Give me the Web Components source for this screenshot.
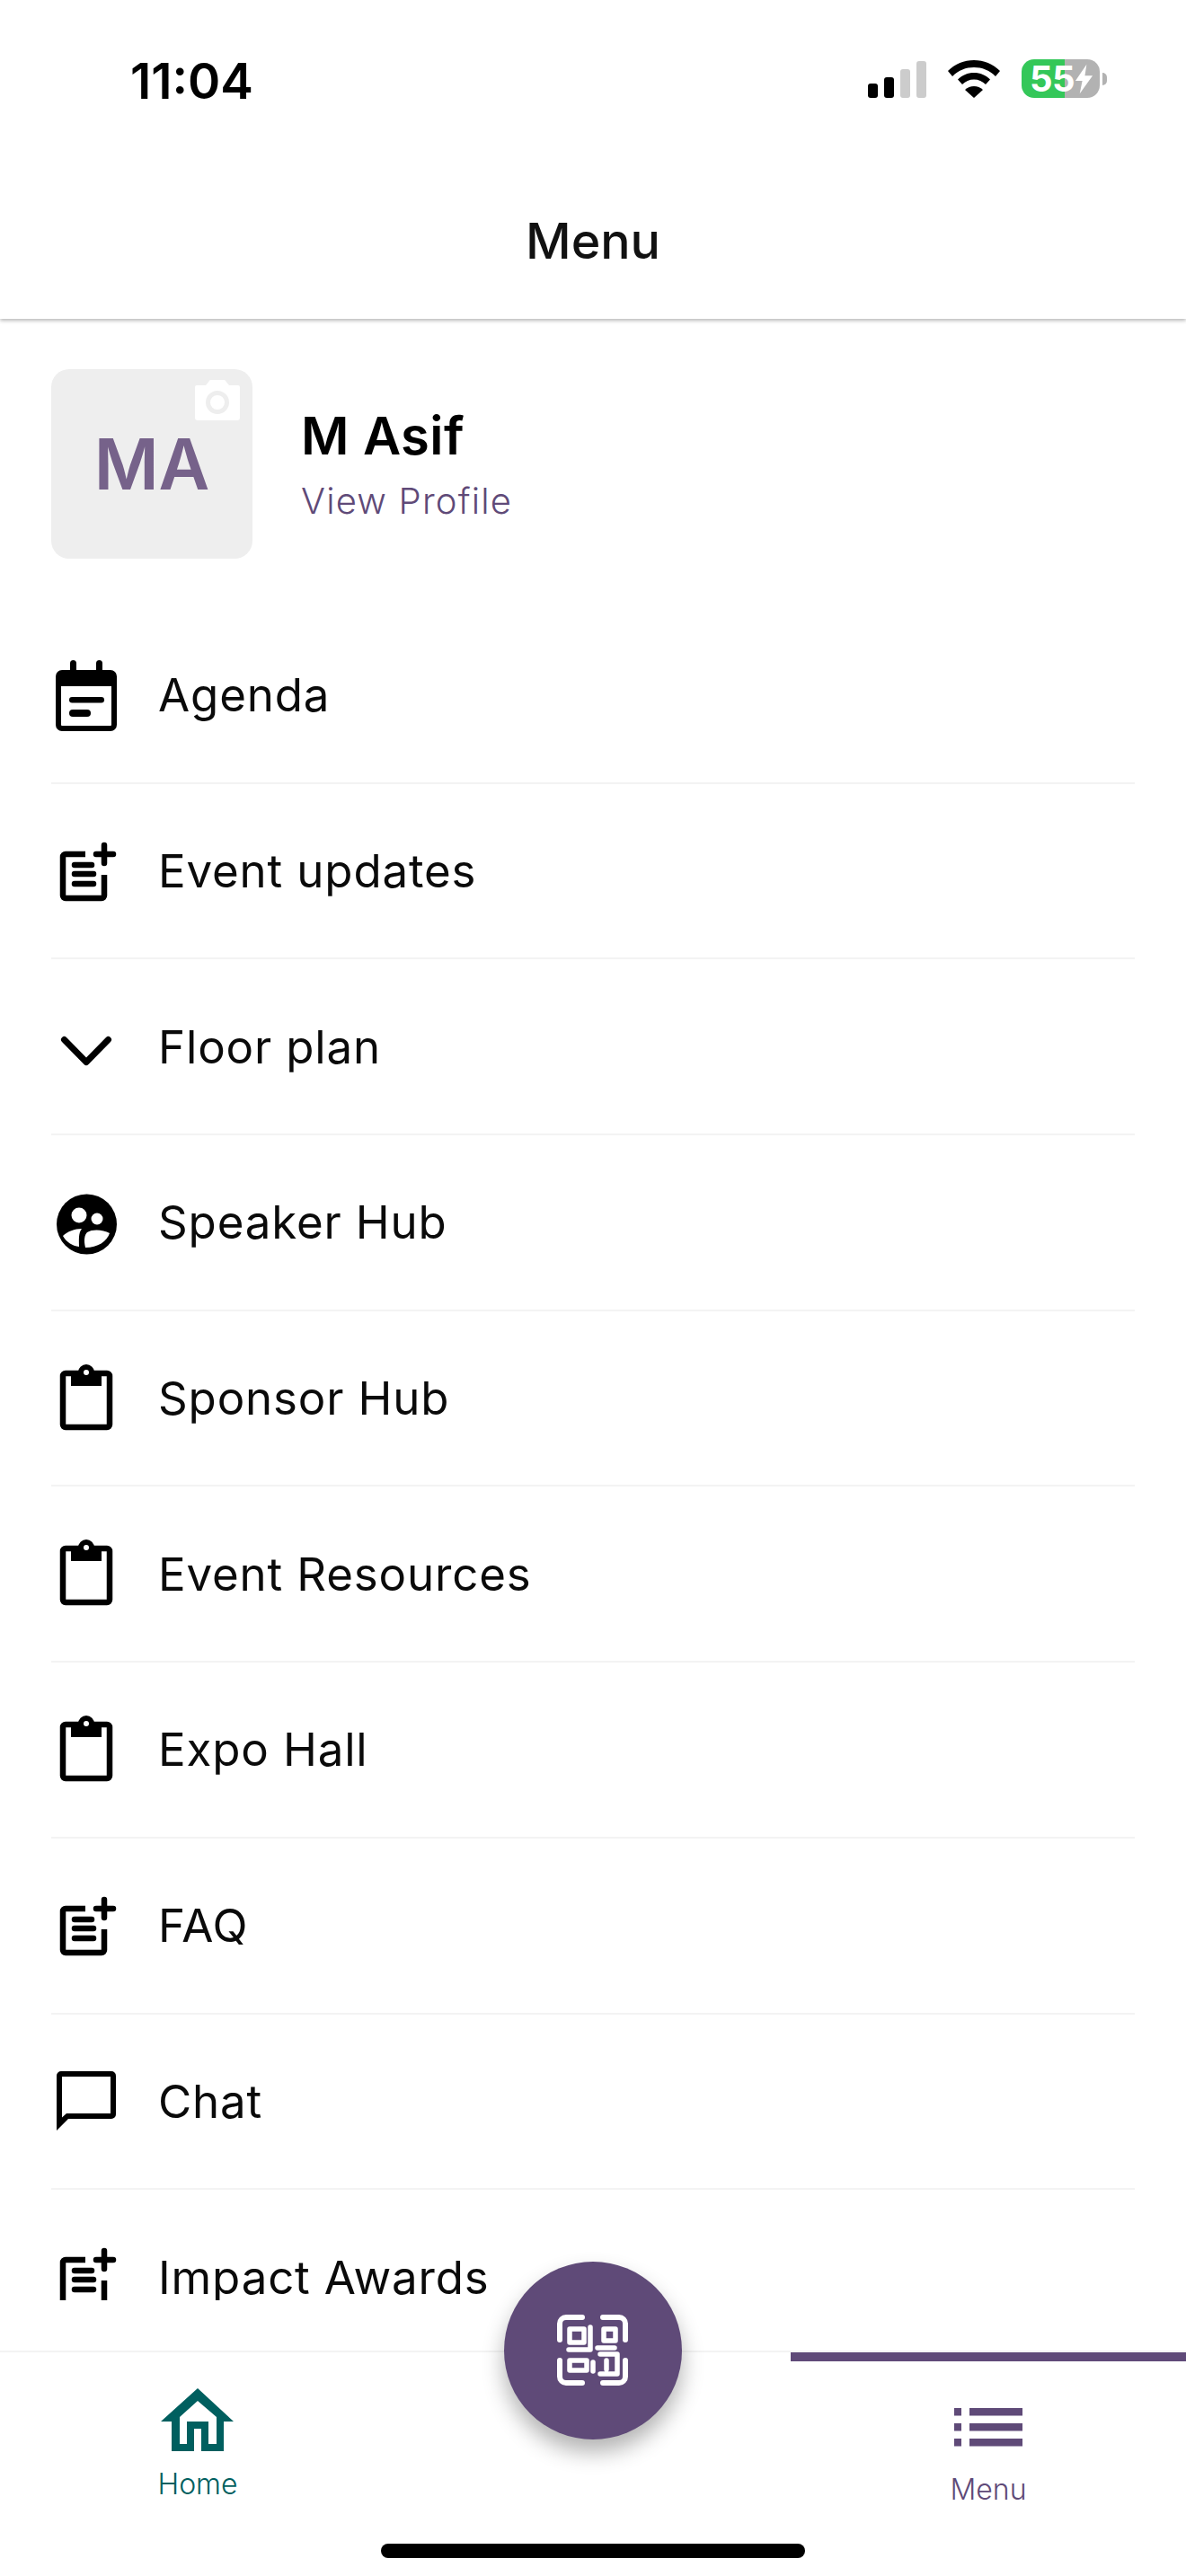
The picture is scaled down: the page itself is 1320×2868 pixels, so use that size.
<!DOCTYPE html>
<html><head><meta charset="utf-8"><style>
html,body{margin:0;padding:0;background:#fff}
body{font-family:Inter,"Liberation Sans",sans-serif;color:#000}
</style></head><body>
<app-shell>
  <status-bar slot="status"></status-bar>
  <top-bar slot="top">Menu</top-bar>
  <profile-card slot="main" initials="MA" name="M Asif" link="View Profile"></profile-card>
  <menu-row slot="main" icon="agenda">Agenda</menu-row>
  <menu-row slot="main" icon="note">Event updates</menu-row>
  <menu-row slot="main" icon="chev">Floor plan</menu-row>
  <menu-row slot="main" icon="group">Speaker Hub</menu-row>
  <menu-row slot="main" icon="clip">Sponsor Hub</menu-row>
  <menu-row slot="main" icon="clip">Event Resources</menu-row>
  <menu-row slot="main" icon="clip">Expo Hall</menu-row>
  <menu-row slot="main" icon="note">FAQ</menu-row>
  <menu-row slot="main" icon="chat">Chat</menu-row>
  <menu-row slot="main" icon="note">Impact Awards</menu-row>
  <bottom-nav slot="nav"></bottom-nav>
</app-shell>
<script>
const ICONS={
agenda:`<svg width="80" height="80" viewBox="0 0 80 80"><path fill="#000" fill-rule="evenodd" d="M21 4.500a3.500 3.500 0 0 1 7 0V12H50V4.500a3.500 3.500 0 0 1 7 0V12h9a7 7 0 0 1 7 7V73a7 7 0 0 1-7 7H12a7 7 0 0 1-7-7V19a7 7 0 0 1 7-7h9zM11 30V73a1 1 0 0 0 1 1H66a1 1 0 0 0 1-1V30z"/><rect x="20" y="42" width="39" height="6.500" rx="3.250"/><rect x="20" y="56" width="24" height="8" rx="4"/></svg>`,
note:`<svg width="80" height="80" viewBox="0 0 80 80"><g fill="none" stroke="#000" stroke-width="6.500" stroke-linecap="round" stroke-linejoin="round"><path d="M38 21H16a3 3 0 0 0-3 3v43a3 3 0 0 0 3 3H56a3 3 0 0 0 3-3V44" stroke-linecap="butt"/><path d="M59 11V31M50 21H69"/><path d="M26 33H45M26 43H47M26 54H47"/></g></svg>`,
chev:`<svg width="80" height="80" viewBox="0 0 80 80"><path fill="none" stroke="#000" stroke-width="7" stroke-linecap="round" stroke-linejoin="round" d="M14.500 32.500L39 57.500 63.500 32.500"/></svg>`,
group:`<svg width="80" height="80" viewBox="0 0 80 80"><circle cx="39.500" cy="42" r="33.500" fill="#000"/><circle cx="31" cy="32" r="8.500" fill="#fff"/><circle cx="51" cy="36" r="6.500" fill="#fff"/><path fill="#fff" d="M13 55C18 50 26 47 34 47 30 52 31 60 31 67 23 66 17 62 13 55z"/><path fill="#fff" d="M38 68C36 60 37 54 40 51 46 47 58 48 65 52 62 61 52 68 38 68z"/></svg>`,
clip:`<svg width="80" height="80" viewBox="0 0 80 80"><rect x="13" y="12" width="52" height="60" rx="3" fill="none" stroke="#000" stroke-width="6.500"/><rect x="22" y="10" width="34" height="16" fill="#000"/><circle cx="39" cy="11" r="9" fill="#000"/><circle cx="39" cy="11" r="3" fill="#fff"/></svg>`,
chat:`<svg width="80" height="80" viewBox="0 0 80 80"><path fill="#000" fill-rule="evenodd" d="M6 12a5 5 0 0 1 5-5H67a5 5 0 0 1 5 5V55a5 5 0 0 1-5 5H19L6 73zM12 13V58.500L17 54H66V13z"/></svg>`
};
function def(name,html){customElements.define(name,class extends HTMLElement{
  connectedCallback(){ if(this.shadowRoot)return; const r=this.attachShadow({mode:'open'}); r.innerHTML=typeof html==='function'?html(this):html; }
});}
def('app-shell',`<style>
:host{display:flex;flex-direction:column;width:1320px;height:2868px;overflow:hidden;background:#fff;position:relative}
.top{flex:none;position:relative;z-index:2;background:#fff;box-shadow:0 2px 4px rgba(0,0,0,.28)}
.main{flex:1;min-height:0;overflow:hidden;padding:0 57px}
.nav{flex:none;position:relative;z-index:3}
</style><div class="top"><slot name="status"></slot><slot name="top"></slot></div><div class="main"><slot name="main"></slot></div><div class="nav"><slot name="nav"></slot></div>`);
def('status-bar',`<style>
:host{display:flex;align-items:flex-start;height:172px;box-sizing:border-box;padding:0 88px 0 145px;justify-content:space-between;font-family:Inter,"Liberation Sans",sans-serif}
.t{font-size:55px;font-weight:600;line-height:66px;margin-top:57px}
.r{display:flex;align-items:flex-end;margin-top:66px;height:43px}
.b{display:flex;align-items:flex-end;gap:7px;height:41px;margin-right:24px}
.b i{display:block;width:11px;border-radius:3px;background:#000}
.b i.o{background:#ccc}
.w{display:block;margin-right:24px}
.bat{width:87px;height:43px;border-radius:14px;background:linear-gradient(90deg,#34c759 0 48px,#b2b2b2 48px);color:#fff;font-size:40px;font-weight:700;display:flex;align-items:center;padding-left:9px;box-sizing:border-box;line-height:43px;letter-spacing:-.5px}
.cap{width:5px;height:14px;background:#b2b2b2;border-radius:0 7px 7px 0;align-self:center;margin-left:3px}
</style><div class="t">11:04</div><div class="r"><div class="b"><i style="height:16px"></i><i style="height:23px"></i><i class="o" style="height:32px"></i><i class="o" style="height:41px"></i></div>
<svg class="w" width="58" height="42" viewBox="0 0 58 42"><path d="M29 0c11 0 21 4 29 12l-5 6C46 11 38 8 29 8S12 11 5 18l-5-6C8 4 18 0 29 0z"/><path d="M29 14c7 0 13 2.500 18 7.500l-5 5.500c-3.500-3.500-8-5.500-13-5.500S19.500 23.500 16 27l-5-5.500C16 16.500 22 14 29 14z"/><path d="M29 29c4 0 7 1.500 10 4L29 42 19 33c3-2.500 6-4 10-4z"/></svg>
<div class="bat"><span>55</span><svg width="21" height="34" viewBox="0 0 22 34"><path fill="#fff" d="M14 0L1 19h8L6 34l15-21h-9z"/></svg></div><div class="cap"></div></div>`);
def('top-bar',`<style>
:host{display:flex;align-items:center;justify-content:center;height:183px;box-sizing:border-box;padding-top:7px;font-size:55.5px;font-weight:450;font-family:Inter,"Liberation Sans",sans-serif;color:#111}
</style><slot></slot>`);
def('profile-card',h=>`<style>
:host{display:flex;align-items:center;height:322px;box-sizing:border-box;padding:56px 0 55px;gap:54px}
.a{position:relative;width:224px;height:211px;background:#eee;border-radius:20px;display:flex;align-items:center;justify-content:center;font-size:78px;font-weight:600;color:#76628a;flex:none}
.a svg{position:absolute;left:160px;top:12px}
.n{font-size:58px;font-weight:600;line-height:70px;letter-spacing:.4px}
.v{font-size:40px;line-height:50px;color:#5f4a78;margin-top:13px;letter-spacing:1.200px;font-weight:300}
.txt{margin-top:-1px}
</style><div class="a">${h.getAttribute('initials')}<svg width="50" height="46" viewBox="0 0 50 46"><path fill="#fff" d="M2 6h10l4-5a2 2 0 0 1 2-1h14a2 2 0 0 1 2 1l4 5h10a2 2 0 0 1 2 2v34a3 3 0 0 1-3 3H3a3 3 0 0 1-3-3V8a2 2 0 0 1 2-2z"/><circle cx="25" cy="25" r="10.500" fill="none" stroke="#eee" stroke-width="5"/></svg></div><div class="txt"><div class="n">${h.getAttribute('name')}</div><div class="v">${h.getAttribute('link')}</div></div>`);
def('menu-row',h=>`<style>
:host{display:flex;align-items:center;height:195.7px;box-sizing:border-box;border-bottom:2px solid #f3f3f3;font-size:51px;font-family:Inter,"Liberation Sans",sans-serif;letter-spacing:.85px;color:#0a0a0a}
.i{flex:none;width:80px;height:80px;margin-right:39px;display:flex}
</style><div class="i">${ICONS[h.getAttribute('icon')]}</div><slot></slot>`);
def('bottom-nav',`<style>
:host{display:block;height:307px;position:relative;font-family:Inter,"Liberation Sans",sans-serif}
.gap{height:56px}
.bar{height:251px;background:#fff;border-top:2px solid #f3f3f3;box-sizing:border-box;display:grid;grid-template-columns:440px 440px 440px;position:relative}
.tab{display:flex;flex-direction:column;align-items:center;font-size:32px;line-height:39px;font-weight:300}
.home{color:#005f5f;padding-top:40px}
.menu{color:#5f4a78;border-top:10px solid #5f4a78;padding-top:52px}
.home span{margin-top:15px}.menu span{margin-top:23px}
.fab{position:absolute;left:561px;top:-101px;width:198px;height:198px;border-radius:50%;background:#5f4a78;box-shadow:0 14px 24px rgba(0,0,0,.3);display:flex;align-items:center;justify-content:center;z-index:2}
.fab svg{filter:blur(.6px)}
.pill{position:absolute;left:424px;top:213px;width:472px;height:16px;border-radius:8px;background:#000}
</style><div class="gap"></div><div class="bar">
<div class="tab home"><svg width="82" height="72" viewBox="29 19 82 72"><path fill="#005f5f" fill-rule="evenodd" d="M70 19L110 56H99V89H74V64H66V89H41V56H29ZM70 33L50 51V81H58V56H82V81H91V51Z"/></svg><span>Home</span></div>
<div></div>
<div class="tab menu"><svg width="76" height="48" viewBox="0 0 76 48"><g fill="#5f4a78"><rect width="8" height="8.500"/><rect x="17" width="59" height="8.500"/><rect y="17" width="8" height="8.500"/><rect x="17" y="17" width="59" height="8.500"/><rect y="34" width="8" height="8.500"/><rect x="17" y="34" width="59" height="8.500"/></g></svg><span>Menu</span></div>
<div class="fab"><svg width="80" height="80" viewBox="0 0 80 80" fill="none" stroke="#fff" stroke-width="5.500" stroke-linecap="round" stroke-linejoin="round"><path stroke-width="6" d="M28 3H10a7 7 0 0 0-7 7V28M51 3H69a7 7 0 0 1 7 7V28M28 76H10a7 7 0 0 1-7-7V51M51 76H69a7 7 0 0 0 7-7V51"/><rect x="14" y="16" width="16" height="15"/><path d="M37 14V39H13"/><rect x="52" y="16" width="13" height="13"/><path d="M45 37H64"/><rect x="14" y="51" width="19" height="11"/><path d="M40 53V63"/><path d="M48 44H67V66H48M55 51V61"/></svg></div>
<div class="pill"></div></div>`);
</script>
</body></html>
